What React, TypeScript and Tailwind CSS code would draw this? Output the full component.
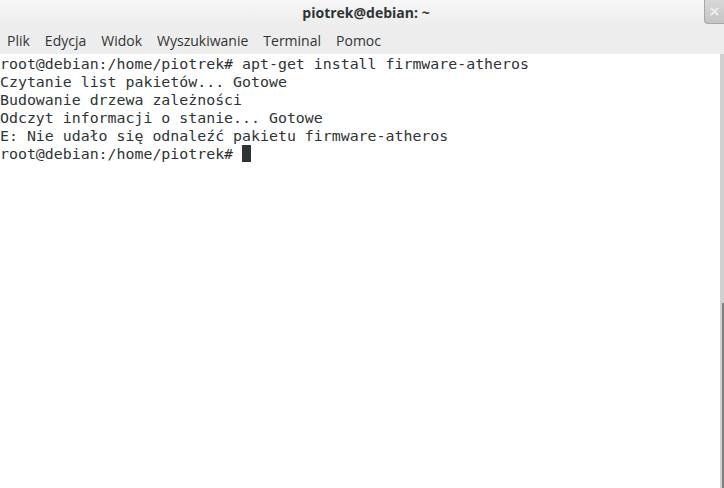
import React from 'react'

const lines = [
  'root@debian:/home/piotrek# apt-get install firmware-atheros',
  'Czytanie list pakietów... Gotowe',
  'Budowanie drzewa zależności',
  'Odczyt informacji o stanie... Gotowe',
  'E: Nie udało się odnaleźć pakietu firmware-atheros',
]

const menu = ['Plik', 'Edycja', 'Widok', 'Wyszukiwanie', 'Terminal', 'Pomoc']

export default function App() {
  return (
    <div className="w-[724px] h-[488px] flex flex-col overflow-hidden bg-[#ededed]">
      {/* Title bar */}
      <div className="relative h-[28px] shrink-0 flex items-start justify-center bg-gradient-to-b from-[#f7f7f7] to-[#ececec]">
        <span className="text-[14px] font-bold text-[#2e3436] pl-[8px] pt-[2px] [font-family:'Open_Sans','Noto_Sans',sans-serif]">
          piotrek@debian: ~
        </span>
        <div className="absolute right-0 top-0 w-[20px] h-[24px] rounded-bl-[4px] border-l border-b border-[#a8a8a8] bg-gradient-to-b from-[#d8d8d8] to-[#c4c4c4] flex items-center justify-center">
          <svg width="9" height="9" viewBox="0 0 9 9">
            <path d="M1.5 1.5 L7.5 7.5 M7.5 1.5 L1.5 7.5" stroke="#ececec" strokeWidth="2.2" strokeLinecap="round" />
          </svg>
        </div>
      </div>

      {/* Menu bar */}
      <div className="h-[26px] shrink-0 flex items-center gap-[15px] pl-[7px] pb-[1px] text-[14px] text-[#333333] [font-family:'Open_Sans','Noto_Sans',sans-serif]">
        {menu.map((m) => (
          <span key={m}>{m}</span>
        ))}
      </div>

      {/* Terminal */}
      <div className="flex-1 flex bg-white">
        <div className="flex-1 pt-[1px] text-[14.9px] leading-[18px] text-[#2e3436] [font-family:'DejaVu_Sans_Mono',monospace]">
          {lines.map((l, i) => (
            <div key={i} className="whitespace-pre">{l}</div>
          ))}
          <div className="whitespace-pre flex items-center">
            <span>root@debian:/home/piotrek# </span>
            <span className="inline-block w-[9px] h-[17px] -mt-[1px] bg-[#2e3436]" />
          </div>
        </div>
        {/* Scrollbar */}
        <div className="w-[4px] flex flex-col bg-[#d0d0d0]">
          <div className="h-[249px]" />
          <div className="flex-1 ml-[2px] bg-[#808080]" />
        </div>
      </div>
    </div>
  )
}
